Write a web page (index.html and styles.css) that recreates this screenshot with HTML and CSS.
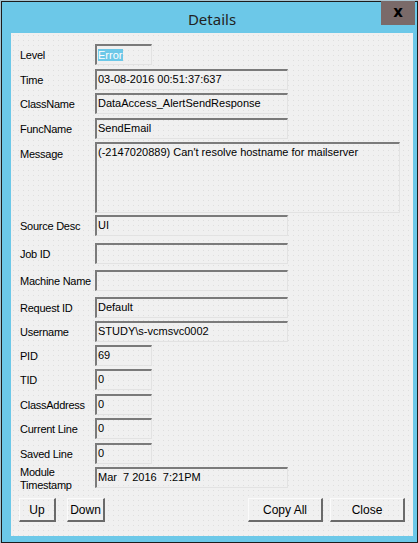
FILE: index.html
```html
<!DOCTYPE html>
<html>
<head>
<meta charset="utf-8">
<link rel="stylesheet" href="styles.css">
</head>
<body>
<div class="window">
  <div class="titlebar">
    <span class="title">Details</span>
    <div class="close">x</div>
  </div>
  <div class="client">
    <div class="form">
      <div class="label">Level</div><div class="field small"><span class="sel">Error</span></div>
      <div class="label">Time</div><div class="field medium">03-08-2016 00:51:37:637</div>
      <div class="label">ClassName</div><div class="field medium">DataAccess_AlertSendResponse</div>
      <div class="label">FuncName</div><div class="field medium">SendEmail</div>
      <div class="label top">Message</div><div class="field large">(-2147020889) Can't resolve hostname for mailserver</div>
      <div class="label">Source Desc</div><div class="field medium">UI</div>
      <div class="label">Job ID</div><div class="field medium"></div>
      <div class="label">Machine Name</div><div class="field medium"></div>
      <div class="label">Request ID</div><div class="field medium">Default</div>
      <div class="label">Username</div><div class="field medium">STUDY\s-vcmsvc0002</div>
      <div class="label">PID</div><div class="field small">69</div>
      <div class="label">TID</div><div class="field small">0</div>
      <div class="label">ClassAddress</div><div class="field small">0</div>
      <div class="label">Current Line</div><div class="field small">0</div>
      <div class="label">Saved Line</div><div class="field small">0</div>
      <div class="label two">Module<br>Timestamp</div><div class="field medium">Mar&nbsp;&nbsp;7 2016&nbsp;&nbsp;7:21PM</div>
    </div>
    <div class="buttons">
      <div class="btn up">Up</div>
      <div class="btn down">Down</div>
      <div class="spacer"></div>
      <div class="btn wide">Copy All</div>
      <div class="btn wide">Close</div>
    </div>
  </div>
</div>
</body>
</html>
```
FILE: styles.css
```css
html, body {
  margin: 0;
  padding: 0;
}
body {
  background: #a9c4d0;
  width: 418px;
  height: 543px;
  overflow: hidden;
  font-family: "Liberation Sans", Arial, sans-serif;
  font-size: 11px;
  color: #000;
}
.window {
  box-sizing: border-box;
  margin: 1px 0 0 1px;
  width: 417px;
  height: 542px;
  border: 1px solid #1c1c1c;
  background: #6cc8e8;
  padding: 0 4px 6px 9px;
  display: flex;
  flex-direction: column;
}
.titlebar {
  height: 31px;
  position: relative;
  display: flex;
  align-items: center;
  justify-content: center;
}
.title {
  font-family: "Noto Sans", "Open Sans", sans-serif;
  font-size: 15px;
  color: #222;
  margin-top: 2px;
}
.close {
  position: absolute;
  right: -2px;
  top: -1px;
  width: 34px;
  height: 24px;
  background: #7a6a69;
  color: #000;
  font-family: "DejaVu Sans", sans-serif;
  font-weight: bold;
  font-size: 15px;
  display: flex;
  align-items: center;
  justify-content: center;
  line-height: 1;
  padding-bottom: 2px;
  box-sizing: border-box;
}
.client {
  flex: 1;
  background-color: #f0f0f0;
  background-image: radial-gradient(circle, #dedede 0.7px, transparent 0.9px);
  background-size: 5px 5px;
  display: flex;
  flex-direction: column;
}
.form {
  display: grid;
  grid-template-columns: 75px auto;
  grid-template-rows: 25px 24px 25px 24px 73px 28px 27px 27px 24px 24px 24px 25px 24px 25px 24px 31px;
  padding: 11px 0 0 9px;
  align-items: start;
}
.label {
  height: 21px;
  line-height: 23px;
  white-space: nowrap;
  letter-spacing: -0.25px;
}
.label.top {
  line-height: 13px;
  height: auto;
  padding-top: 6px;
}
.label.two {
  line-height: 13px;
  height: auto;
  margin-top: -1px;
}
.field {
  box-sizing: border-box;
  height: 21px;
  border-style: solid;
  border-width: 2px 1px 1px 2px;
  border-color: #7a7a7a #e2e2e2 #e2e2e2 #7a7a7a;
  padding: 2px 0 0 1px;
  line-height: 13px;
  white-space: nowrap;
  overflow: hidden;
  background: transparent;
}
.field.small { width: 57px; }
.field.medium { width: 193px; }
.field.large { width: 305px; height: 71px; }
.sel {
  background: #6cc8e8;
  color: #fff;
  display: inline-block;
  padding: 1px 1px 0 0;
  margin-top: 1px;
  line-height: 11px;
}
.buttons {
  display: flex;
  padding: 0 8px 0 8px;
}
.btn {
  box-sizing: border-box;
  height: 24px;
  border-style: solid;
  border-width: 1px 2px 2px 1px;
  border-color: #fafafa #6a6a6a #6a6a6a #fafafa;
  display: flex;
  align-items: center;
  justify-content: center;
  font-size: 12px;
  padding-top: 1px;
}
.btn.up { width: 37px; margin-right: 11px; }
.btn.down { width: 38px; }
.spacer { flex: 1; }
.btn.wide { width: 75px; margin-left: 7px; }
```
